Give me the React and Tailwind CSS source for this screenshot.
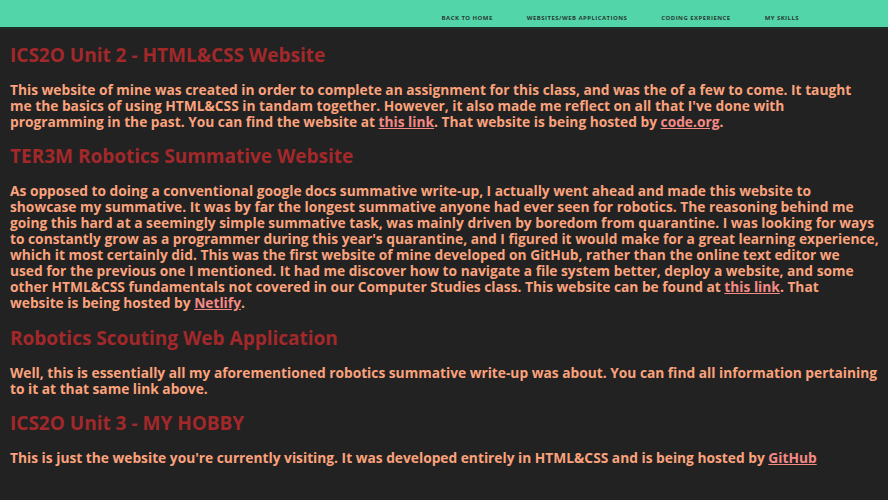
export default function App() {
  const body = "text-[13.75px] leading-[16px] font-bold text-[#fba27c] mt-[15px] whitespace-nowrap";
  const h = "text-[19px] leading-[24px] font-bold text-[#a3282a]";
  const a = "text-[#f48a84] underline";
  return (
    <div className="min-h-[500px] bg-[#222222] overflow-hidden" style={{ fontFamily: '"Open Sans", sans-serif' }}>
      <nav className="h-[29px] bg-[#52d6a9] border-b-2 border-[#1b2d26] flex items-center justify-end pr-[89px] gap-[34px] text-[6px] font-bold uppercase text-[#2a3a35] tracking-[0.45px] pt-[9px]">
        <span>Back to Home</span>
        <span>Websites/Web Applications</span>
        <span>Coding Experience</span>
        <span>My Skills</span>
      </nav>
      <main className="pl-[10px] pt-[14px]">
        <h2 className={h}>ICS2O Unit 2 - HTML&amp;CSS Website</h2>
        <p className={body}>
          This website of mine was created in order to complete an assignment for this class, and was the of a few to come. It taught<br />
          me the basics of using HTML&amp;CSS in tandam together. However, it also made me reflect on all that I've done with<br />
          programming in the past. You can find the website at <a className={a}>this link</a>. That website is being hosted by <a className={a}>code.org</a>.
        </p>
        <h2 className={h + " mt-[14px]"}>TER3M Robotics Summative Website</h2>
        <p className={body}>
          As opposed to doing a conventional google docs summative write-up, I actually went ahead and made this website to<br />
          showcase my summative. It was by far the longest summative anyone had ever seen for robotics. The reasoning behind me<br />
          going this hard at a seemingly simple summative task, was mainly driven by boredom from quarantine. I was looking for ways<br />
          to constantly grow as a programmer during this year's quarantine, and I figured it would make for a great learning experience,<br />
          which it most certainly did. This was the first website of mine developed on GitHub, rather than the online text editor we<br />
          used for the previous one I mentioned. It had me discover how to navigate a file system better, deploy a website, and some<br />
          other HTML&amp;CSS fundamentals not covered in our Computer Studies class. This website can be found at <a className={a}>this link</a>. That<br />
          website is being hosted by <a className={a}>Netlify</a>.
        </p>
        <h2 className={h + " mt-[15px]"}>Robotics Scouting Web Application</h2>
        <p className={body}>
          Well, this is essentially all my aforementioned robotics summative write-up was about. You can find all information pertaining<br />
          to it at that same link above.
        </p>
        <h2 className={h + " mt-[14px]"}>ICS2O Unit 3 - MY HOBBY</h2>
        <p className={body}>
          This is just the website you're currently visiting. It was developed entirely in HTML&amp;CSS and is being hosted by <a className={a}>GitHub</a>
        </p>
      </main>
    </div>
  );
}
